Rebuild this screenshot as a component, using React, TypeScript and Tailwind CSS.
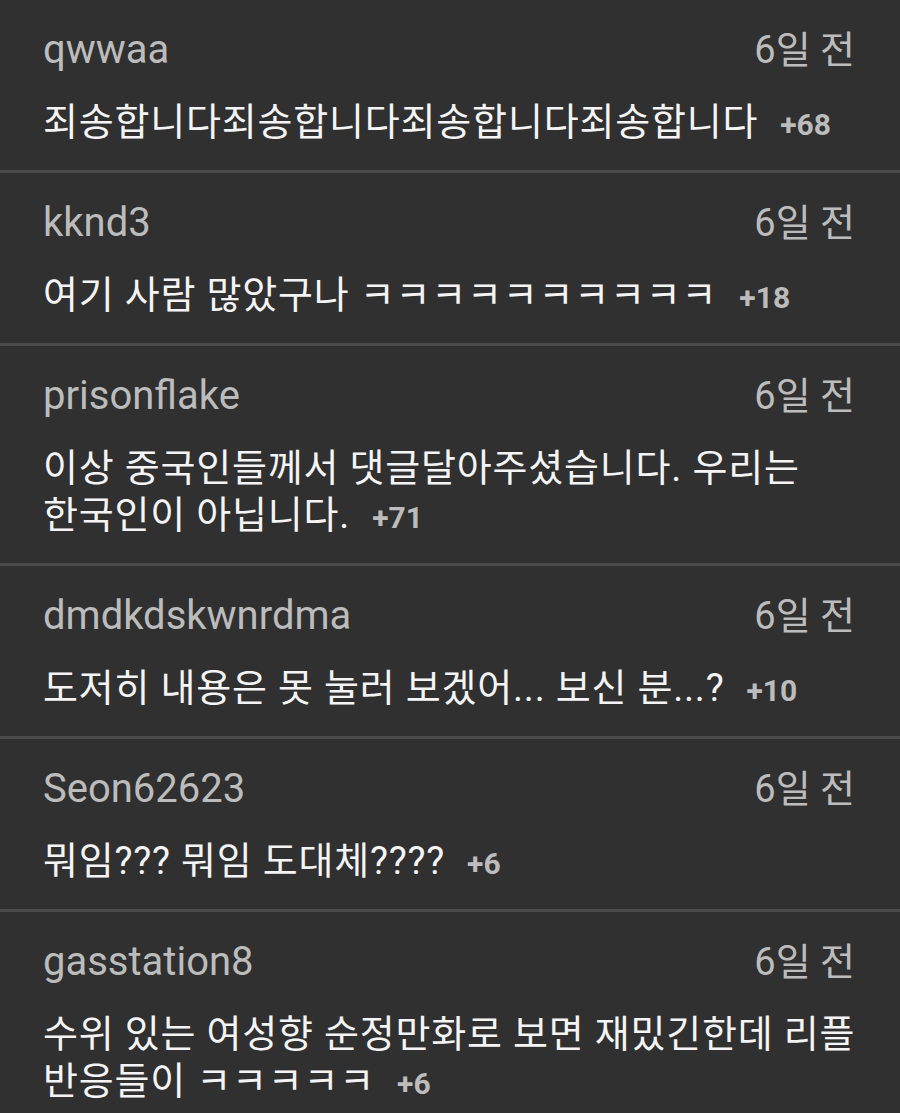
const COMMENTS = [
  { user: 'qwwaa', text: '죄송합니다죄송합니다죄송합니다죄송합니다', score: 68 },
  { user: 'kknd3', text: '여기 사람 많았구나 ㅋㅋㅋㅋㅋㅋㅋㅋㅋㅋ', score: 18 },
  { user: 'prisonflake', text: '이상 중국인들께서 댓글달아주셨습니다. 우리는 한국인이 아닙니다.', score: 71 },
  { user: 'dmdkdskwnrdma', text: '도저히 내용은 못 눌러 보겠어... 보신 분...?', score: 10 },
  { user: 'Seon62623', text: '뭐임??? 뭐임 도대체????', score: 6 },
  { user: 'gasstation8', text: '수위 있는 여성향 순정만화로 보면 재밌긴한데 리플 반응들이 ㅋㅋㅋㅋㅋ', score: 6 },
];

export default function App() {
  return (
    <div className="min-h-[1113px] w-[900px] overflow-hidden bg-[#303030] font-['Roboto','Noto_Sans_CJK_KR',sans-serif]">
      {COMMENTS.map((c) => (
        <div key={c.user} className="flex flex-col gap-[26px] border-b-[3px] border-[#4a4a4a] pb-[24px] pl-[43px] pr-[45px] pt-[27px]">
          <div className="flex items-center justify-between leading-[46px] text-[#bcbcbc]">
            <span className="text-[40px]">{c.user}</span>
            <span className="text-[38px]">6일 전</span>
          </div>
          <p className="-mr-[10px] break-keep text-[38px] leading-[47px] tracking-[0.8px] text-[#f4f4f4]">
            {c.text}
            <span className="ml-[22px] whitespace-nowrap text-[30px] leading-[30px] font-bold tracking-normal text-[#bcbcbc]">+{c.score}</span>
          </p>
        </div>
      ))}
    </div>
  );
}
